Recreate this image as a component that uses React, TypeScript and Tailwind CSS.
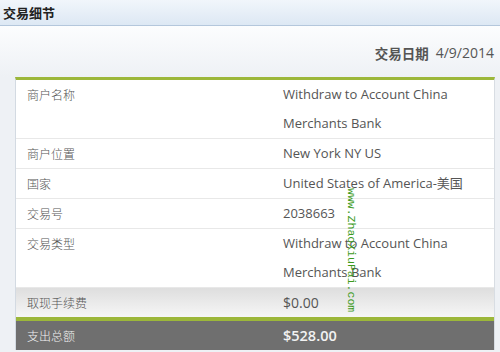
import React from "react";

type Row = { label: string; value: string[] };

const rows: Row[] = [
  { label: "商户名称", value: ["Withdraw to Account China", "Merchants Bank"] },
  { label: "商户位置", value: ["New York NY US"] },
  { label: "国家", value: ["United States of America-美国"] },
  { label: "交易号", value: ["2038663"] },
  { label: "交易类型", value: ["Withdraw to Account China", "Merchants Bank"] },
];

export default function App() {
  return (
    <div className="relative w-[500px] h-[352px] overflow-hidden bg-[#eef1f5] font-['Noto_Sans_CJK_SC',sans-serif]">
      <div className="h-[26px] flex items-center pl-[3px] border-b border-[#b4c7dc] bg-gradient-to-b from-[#f1f6fb] to-[#dde8f4] text-[13px] font-bold text-[#222]">
        交易细节
      </div>
      <div className="h-[51px] flex justify-end items-start pt-[19px] pr-[6px] bg-gradient-to-b from-[#fcfdfe] to-[#eef1f5] leading-[16px] text-[#555]">
        <span className="text-[13.5px] font-bold">交易日期</span>
        <span className="ml-[7px] text-[14px] font-['Open_Sans','Noto_Sans_CJK_SC',sans-serif]">4/9/2014</span>
      </div>
      <div className="ml-[15px] w-[480px] border-t-[3px] border-t-[#9cb73a] border-l border-r border-l-[#d3dae2] border-r-[#d8dde3] bg-white text-[12px] leading-[29px] text-[#555]">
        {rows.map((r, i) => (
          <div key={i} className="flex border-b border-[#e8e8e8]">
            <div className="w-[267px] pl-[11px] font-light">{r.label}</div>
            <div className="flex-1 text-[13px] font-['Open_Sans','Noto_Sans_CJK_SC',sans-serif]">
              {r.value.map((v, j) => (
                <div key={j}>{v}</div>
              ))}
            </div>
          </div>
        ))}
        <div className="flex h-[29px] bg-gradient-to-b from-[#dedede] to-[#f6f6f6]">
          <div className="w-[267px] pl-[11px] font-light">取现手续费</div>
          <div className="flex-1 text-[14px] font-['Open_Sans',sans-serif]">$0.00</div>
        </div>
        <div className="flex h-[33px] border-t-[4px] border-t-[#9cb73a] bg-[#6f6f6f] text-[#f2f2f2]">
          <div className="w-[267px] pl-[11px] font-light">支出总额</div>
          <div className="flex-1 text-[14.5px] font-semibold font-['Open_Sans',sans-serif]">$528.00</div>
        </div>
      </div>
      <div className="absolute left-[346px] top-[188px] text-[11.5px] leading-[11px] text-[#3b9a1c] [writing-mode:vertical-rl] font-['Liberation_Mono',monospace]">
        www.ZhaoXiuPai.com
      </div>
    </div>
  );
}
